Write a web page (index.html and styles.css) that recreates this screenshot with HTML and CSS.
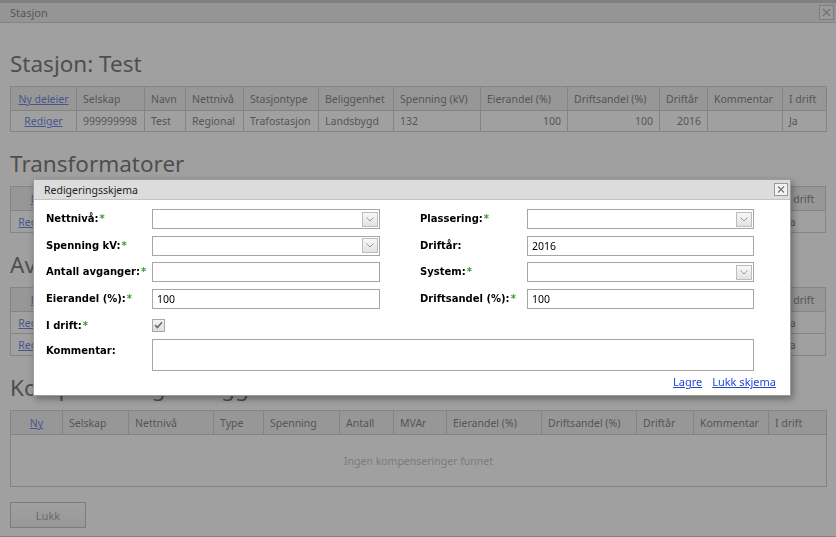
FILE: index.html
```html
<!DOCTYPE html>
<html lang="no">
<head>
<meta charset="utf-8">
<title>Stasjon</title>
<link rel="stylesheet" href="styles.css">
</head>
<body>
<div class="window">
  <div class="window-titlebar">
    <span class="window-title">Stasjon</span>
    <span class="window-close"><svg width="9" height="9" viewBox="0 0 9 9"><path d="M1 1L8 8M8 1L1 8" stroke="#8a8a8a" stroke-width="1.3" fill="none"/></svg></span>
  </div>
  <div class="window-content">
    <h2 class="section-title">Stasjon: Test</h2>
    <table class="grid station-table">
      <colgroup><col><col><col><col><col><col><col><col><col><col><col><col></colgroup>
      <thead>
        <tr><th class="center"><a class="link" href="#">Ny deleier</a></th><th>Selskap</th><th>Navn</th><th>Nettnivå</th><th>Stasjontype</th><th>Beliggenhet</th><th>Spenning (kV)</th><th>Eierandel (%)</th><th>Driftsandel (%)</th><th>Driftår</th><th>Kommentar</th><th>I drift</th></tr>
      </thead>
      <tbody>
        <tr><td class="center"><a class="link" href="#">Rediger</a></td><td>999999998</td><td>Test</td><td>Regional</td><td>Trafostasjon</td><td>Landsbygd</td><td>132</td><td class="num">100</td><td class="num">100</td><td class="num">2016</td><td></td><td>Ja</td></tr>
      </tbody>
    </table>

    <h2 class="section-title">Transformatorer</h2>
    <table class="grid grid-actions">
      <thead>
        <tr><th class="center col-action"><a class="link" href="#">Ny</a></th><th>Selskap</th><th>Navn</th><th>Ytelse (kVA)</th><th>Omsetning</th><th>Produsent</th><th>Produksjonsår</th><th>Eierandel (%)</th><th>Driftsandel (%)</th><th>Driftår</th><th>Kommentar</th><th class="col-drift">I drift</th></tr>
      </thead>
      <tbody>
        <tr class="tall"><td class="center"><a class="link" href="#">Rediger</a></td><td>999999998</td><td>T1</td><td class="num">1000</td><td>132/22</td><td>ABB</td><td class="num">1998</td><td class="num">100</td><td class="num">100</td><td class="num">2016</td><td></td><td>Ja</td></tr>
      </tbody>
    </table>

    <h2 class="section-title">Avganger</h2>
    <table class="grid grid-actions">
      <thead>
        <tr><th class="center col-action"><a class="link" href="#">Ny</a></th><th>Selskap</th><th>Navn</th><th>Nettnivå</th><th>Spenning</th><th>Type</th><th>Eierandel (%)</th><th>Driftsandel (%)</th><th>Driftår</th><th>Kommentar</th><th class="col-drift">I drift</th></tr>
      </thead>
      <tbody>
        <tr><td class="center"><a class="link" href="#">Rediger</a></td><td>999999998</td><td>Avgang 1</td><td>Regional</td><td>22</td><td>Luftlinje</td><td class="num">100</td><td class="num">100</td><td class="num">2016</td><td></td><td>Ja</td></tr>
        <tr><td class="center"><a class="link" href="#">Rediger</a></td><td>999999998</td><td>Avgang 2</td><td>Regional</td><td>22</td><td>Kabel</td><td class="num">100</td><td class="num">100</td><td class="num">2016</td><td></td><td>Ja</td></tr>
      </tbody>
    </table>

    <h2 class="section-title">Kompenseringsanlegg</h2>
    <table class="grid comp-table">
      <colgroup><col><col><col><col><col><col><col><col><col><col><col><col></colgroup>
      <thead>
        <tr><th class="center"><a class="link" href="#">Ny</a></th><th>Selskap</th><th>Nettnivå</th><th>Type</th><th>Spenning</th><th>Antall</th><th>MVAr</th><th>Eierandel (%)</th><th>Driftsandel (%)</th><th>Driftår</th><th>Kommentar</th><th>I drift</th></tr>
      </thead>
      <tbody>
        <tr><td class="empty" colspan="12">Ingen kompenseringer funnet</td></tr>
      </tbody>
    </table>

    <button class="btn" type="button">Lukk</button>
  </div>
</div>

<div class="overlay"></div>

<div class="modal" role="dialog" aria-label="Redigeringsskjema">
  <div class="modal-titlebar">
    <span class="modal-title">Redigeringsskjema</span>
    <span class="modal-close"><svg width="8" height="7" viewBox="0 0 8 7"><path d="M1 0.5L7 6.5M7 0.5L1 6.5" stroke="#777" stroke-width="1.2" fill="none"/></svg></span>
  </div>
  <form class="form-grid">
    <label class="f-label">Nettnivå:<span class="req">*</span></label>
    <div class="field select"><span class="select-btn"><svg width="8" height="5" viewBox="0 0 8 5"><path d="M0.5 0.5L4 4L7.5 0.5" stroke="#999" stroke-width="1" fill="none"/></svg></span></div>
    <label class="f-label right">Plassering:<span class="req">*</span></label>
    <div class="field select"><span class="select-btn"><svg width="8" height="5" viewBox="0 0 8 5"><path d="M0.5 0.5L4 4L7.5 0.5" stroke="#999" stroke-width="1" fill="none"/></svg></span></div>

    <label class="f-label">Spenning kV:<span class="req">*</span></label>
    <div class="field select"><span class="select-btn"><svg width="8" height="5" viewBox="0 0 8 5"><path d="M0.5 0.5L4 4L7.5 0.5" stroke="#999" stroke-width="1" fill="none"/></svg></span></div>
    <label class="f-label right">Driftår:</label>
    <input class="field" type="text" value="2016">

    <label class="f-label">Antall avganger:<span class="req">*</span></label>
    <input class="field" type="text" value="">
    <label class="f-label right">System:<span class="req">*</span></label>
    <div class="field select"><span class="select-btn"><svg width="8" height="5" viewBox="0 0 8 5"><path d="M0.5 0.5L4 4L7.5 0.5" stroke="#999" stroke-width="1" fill="none"/></svg></span></div>

    <label class="f-label">Eierandel (%):<span class="req">*</span></label>
    <input class="field" type="text" value="100">
    <label class="f-label right">Driftsandel (%):<span class="req">*</span></label>
    <input class="field" type="text" value="100">

    <label class="f-label">I drift:<span class="req">*</span></label>
    <span class="checkbox"><svg width="9" height="8" viewBox="0 0 9 8"><path d="M1 4.2L3.4 6.5L8 1.2" stroke="#6a6a6a" stroke-width="1.6" fill="none"/></svg></span>

    <label class="f-label f-label-area">Kommentar:</label>
    <textarea class="field textarea"></textarea>
  </form>
  <div class="modal-actions">
    <a class="link" href="#">Lagre</a>
    <a class="link" href="#">Lukk skjema</a>
  </div>
</div>
</body>
</html>
```
FILE: styles.css
```css
* { box-sizing: border-box; }

html, body {
  margin: 0;
  height: 100%;
}

body {
  font-family: "Noto Sans", "DejaVu Sans", sans-serif;
  background: #fff;
  overflow: hidden;
}

.link {
  color: #2446cf;
  text-decoration: underline;
}

/* Outer window */
.window {
  height: 537px;
  display: flex;
  flex-direction: column;
  background: #fff;
  border-top: 3px solid #aeaeae;
  border-bottom: 1px solid #b4b4b4;
}

.window-titlebar {
  flex: none;
  height: 20px;
  display: flex;
  align-items: center;
  justify-content: space-between;
  padding: 0 2px 0 10px;
  background: #e4e4e4;
  border-bottom: 1px solid #bababa;
}

.window-title {
  font-size: 11px;
  color: #444;
}

.window-close {
  width: 15px;
  height: 15px;
  display: flex;
  align-items: center;
  justify-content: center;
  border: 1px solid #a8a8a8;
  background: #f2f2f2;
}

.window-content {
  flex: 1;
  padding: 9px 10px 0;
  overflow: hidden;
}

.section-title {
  margin: 17px 0 7px;
  font-size: 22.5px;
  line-height: 30px;
  font-weight: normal;
  color: #333;
  white-space: nowrap;
}

/* Tables */
.grid {
  width: 100%;
  border-collapse: collapse;
  font-size: 10.5px;
  color: #444;
}

.grid th,
.grid td {
  border: 1px solid #b8b8b8;
  padding: 3px 6px;
  line-height: 14px;
  text-align: left;
  font-weight: normal;
  white-space: nowrap;
  overflow: hidden;
}

.grid th {
  background: #e8e8e8;
  padding: 5px 6px 4px;
}

.grid .center { text-align: center; }
.grid .num { text-align: right; }

.grid-actions td { padding: 4px 6px 3px; }
.grid-actions .col-action { width: 54px; }
.grid-actions .col-drift { width: 45px; }

.grid .empty {
  text-align: center;
  color: #a2a2a2;
  padding: 19px 6px 18px;
}

.station-table,
.comp-table { table-layout: fixed; }

.station-table col:nth-child(1) { width: 66px; }
.station-table col:nth-child(2) { width: 68px; }
.station-table col:nth-child(3) { width: 41px; }
.station-table col:nth-child(4) { width: 58px; }
.station-table col:nth-child(5) { width: 75px; }
.station-table col:nth-child(6) { width: 75px; }
.station-table col:nth-child(7) { width: 87px; }
.station-table col:nth-child(8) { width: 87px; }
.station-table col:nth-child(9) { width: 92px; }
.station-table col:nth-child(10) { width: 48px; }
.station-table col:nth-child(11) { width: 75px; }
.station-table col:nth-child(12) { width: 44px; }

.comp-table col:nth-child(1) { width: 52px; }
.comp-table col:nth-child(2) { width: 66px; }
.comp-table col:nth-child(3) { width: 85px; }
.comp-table col:nth-child(4) { width: 50px; }
.comp-table col:nth-child(5) { width: 76px; }
.comp-table col:nth-child(6) { width: 54px; }
.comp-table col:nth-child(7) { width: 53px; }
.comp-table col:nth-child(8) { width: 95px; }
.comp-table col:nth-child(9) { width: 95px; }
.comp-table col:nth-child(10) { width: 57px; }
.comp-table col:nth-child(11) { width: 75px; }
.comp-table col:nth-child(12) { width: 58px; }

.btn {
  display: block;
  margin-top: 15px;
  width: 76px;
  height: 26px;
  border: 1px solid #a2a2a2;
  background: linear-gradient(#ffffff, #ececec);
  color: #777;
  font: 11px "Noto Sans", sans-serif;
  padding: 0;
}

/* Overlay */
.overlay {
  position: fixed;
  inset: 0;
  background: rgba(96, 96, 96, 0.6);
}

/* Modal */
.modal {
  position: absolute;
  left: 33px;
  top: 179px;
  width: 758px;
  background: #fff;
  border: 1px solid #9c9c9c;
  box-shadow: 2px 3px 7px rgba(0, 0, 0, 0.35);
}

.modal-titlebar {
  height: 20px;
  display: flex;
  align-items: center;
  justify-content: space-between;
  padding: 0 2px 0 10px;
  background: #dcdcdc;
  border-bottom: 1px solid #c4c4c4;
}

.modal-title {
  font-size: 10.5px;
  color: #222;
}

.modal-close {
  width: 14px;
  height: 13px;
  display: flex;
  align-items: center;
  justify-content: center;
  border: 1px solid #9a9a9a;
  background: #f3f3f3;
}

.form-grid {
  display: grid;
  grid-template-columns: 106px 228px 40px 107px 227px;
  row-gap: 6.7px;
  align-items: start;
  margin: 0;
  padding: 9px 0 0 12px;
}

.f-label {
  grid-column: 1;
  padding-top: 3px;
  font: bold 10px/14px "DejaVu Sans", sans-serif;
  color: #000;
  white-space: nowrap;
}

.f-label.right { grid-column: 4; }
.f-label-area { padding-top: 5px; }

.req {
  color: #3a9a3a;
  margin-left: 1px;
}

.field {
  width: 100%;
  height: 20px;
  margin: 0;
  padding: 0 4px;
  border: 1px solid #a6a6a6;
  border-radius: 0;
  background: #fff;
  color: #000;
  font: 10.5px "Noto Sans", sans-serif;
  outline: none;
}

.select {
  display: flex;
  align-items: center;
  justify-content: flex-end;
  padding: 0 1px 0 0;
}

.select-btn {
  width: 16px;
  height: 15px;
  display: flex;
  align-items: center;
  justify-content: center;
  border: 1px solid #bcbcbc;
  background: linear-gradient(#f8f8f8, #e2e2e2);
}

.checkbox {
  grid-column: 2;
  width: 13px;
  height: 13px;
  margin-top: 3px;
  display: flex;
  align-items: center;
  justify-content: center;
  border: 1px solid #a8a8a8;
  background: linear-gradient(#f2f2f2, #dedede);
}

.textarea {
  grid-column: 2 / 6;
  height: 32px;
  resize: none;
  display: block;
}

.modal-actions {
  display: flex;
  justify-content: flex-end;
  gap: 10px;
  padding: 3px 14px 6px 0;
  font-size: 11px;
  line-height: 15px;
}
```
